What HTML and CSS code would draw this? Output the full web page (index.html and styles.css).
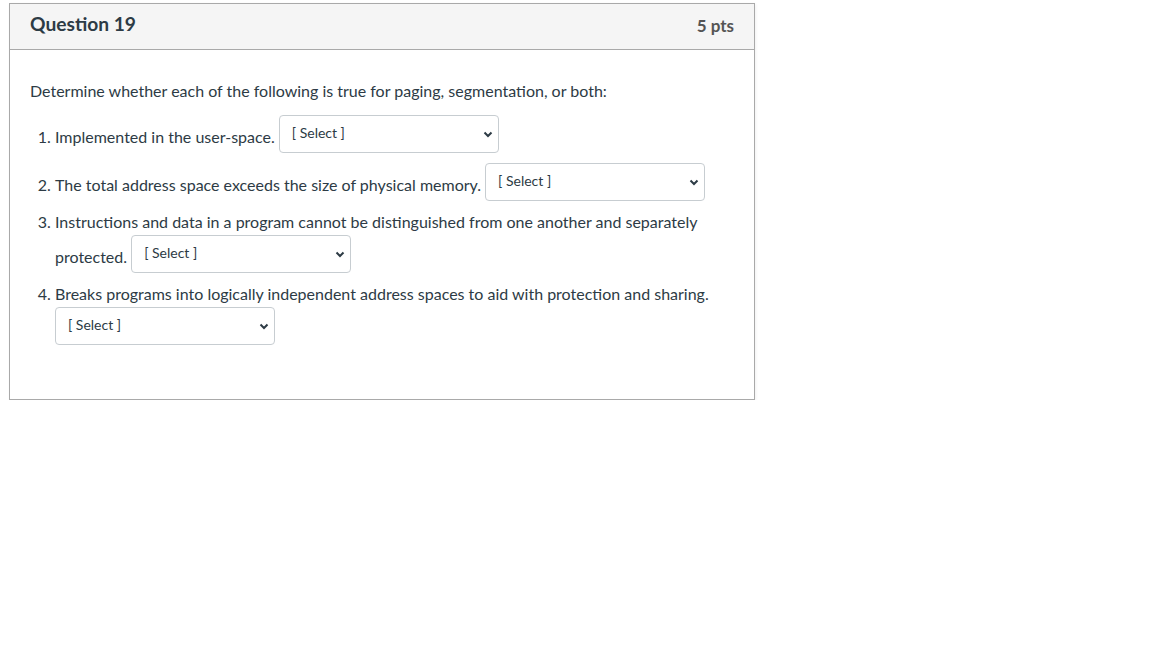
FILE: index.html
```html
<!DOCTYPE html>
<html lang="en">
<head>
<meta charset="utf-8">
<title>Question 19</title>
<link rel="stylesheet" href="styles.css">
</head>
<body>
<div class="question">
  <div class="header">
    <span class="title">Question 19</span>
    <span class="points">5 pts</span>
  </div>
  <div class="content">
    <p class="intro">Determine whether each of the following is true for paging, segmentation, or both:</p>
    <ol class="items">
      <li>Implemented in the user-space. <span class="select"><span class="label">[ Select ]</span><svg class="chev" width="10" height="7" viewBox="0 0 10 7"><path d="M1.5 1.5 L5 5 L8.5 1.5" fill="none" stroke="#2d3b45" stroke-width="2"/></svg></span></li>
      <li>The total address space exceeds the size of physical memory. <span class="select"><span class="label">[ Select ]</span><svg class="chev" width="10" height="7" viewBox="0 0 10 7"><path d="M1.5 1.5 L5 5 L8.5 1.5" fill="none" stroke="#2d3b45" stroke-width="2"/></svg></span></li>
      <li>Instructions and data in a program cannot be distinguished from one another and separately protected. <span class="select"><span class="label">[ Select ]</span><svg class="chev" width="10" height="7" viewBox="0 0 10 7"><path d="M1.5 1.5 L5 5 L8.5 1.5" fill="none" stroke="#2d3b45" stroke-width="2"/></svg></span></li>
      <li>Breaks programs into logically independent address spaces to aid with protection and sharing. <span class="select"><span class="label">[ Select ]</span><svg class="chev" width="10" height="7" viewBox="0 0 10 7"><path d="M1.5 1.5 L5 5 L8.5 1.5" fill="none" stroke="#2d3b45" stroke-width="2"/></svg></span></li>
    </ol>
  </div>
</div>
</body>
</html>
```

FILE: styles.css
```css
html, body {
  margin: 0;
  padding: 0;
  background: #ffffff;
}

body {
  font-family: Lato, "Liberation Sans", sans-serif;
  color: #2d3b45;
  font-size: 16px;
  line-height: 24px;
}

.question {
  margin: 3px 0 0 9px;
  width: 744px;
  border: 1px solid #a9a9a9;
  box-shadow: 1px 1px 3px rgba(0, 0, 0, 0.06);
}

.header {
  display: flex;
  justify-content: space-between;
  align-items: flex-start;
  box-sizing: border-box;
  height: 46px;
  padding: 0 20px;
  background: #f5f5f5;
  border-bottom: 1px solid #a9a9a9;
}

.title {
  margin-top: 8px;
  font-weight: 700;
  font-size: 19.2px;
  color: #2d3b45;
}

.points {
  margin-top: 9.5px;
  font-weight: 700;
  font-size: 17px;
  color: #545454;
}

.content {
  padding: 15px 20px 45px 20px;
}

.intro {
  margin: 14px 0 11px 0;
}

.items {
  margin: 0;
  padding-left: 25px;
}

.select {
  display: inline-block;
  box-sizing: border-box;
  width: 220px;
  height: 38px;
  margin: 1px 0 9px 0;
  padding: 7px 0 0 12px;
  border: 1px solid #c7cdd1;
  border-radius: 4px;
  background: #ffffff;
  font-size: 14px;
  line-height: 20px;
  vertical-align: 5px;
  position: relative;
}

.label {
  color: #2d3b45;
}

.chev {
  position: absolute;
  right: 5px;
  top: 15px;
}
```
